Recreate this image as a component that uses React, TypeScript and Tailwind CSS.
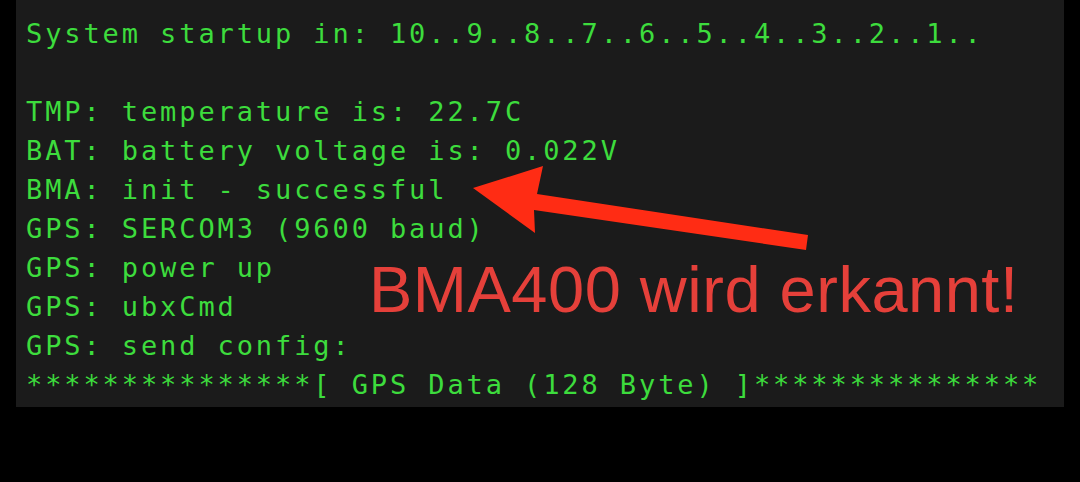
const lines = [
  "System startup in: 10..9..8..7..6..5..4..3..2..1..",
  "",
  "TMP: temperature is: 22.7C",
  "BAT: battery voltage is: 0.022V",
  "BMA: init - successful",
  "GPS: SERCOM3 (9600 baud)",
  "GPS: power up",
  "GPS: ubxCmd",
  "GPS: send config:",
  "***************[ GPS Data (128 Byte) ]***************",
];

function Arrow() {
  // page coords minus the panel's 16px left offset
  return (
    <svg
      className="absolute left-0 top-0 h-[407px] w-[1048px] pointer-events-none"
      viewBox="0 0 1048 407"
      aria-hidden="true"
    >
      <polygon
        points="457,188 527,166 521,194 792,235 790,250 518,210 519,233"
        fill="#ff2c14"
        style={{ filter: "blur(0.6px)" }}
      />
    </svg>
  );
}

export default function App() {
  return (
    <div className="h-[482px] w-full bg-black">
      <div className="relative ml-[16px] h-[407px] w-[1048px] overflow-hidden bg-[#1b1b1b]">
        <pre
          className="pl-[10px] pt-[14px] text-[27px] leading-[39px] tracking-[2.9px] text-[#3ddc3d]"
          style={{ fontFamily: '"DejaVu Sans Mono", "Liberation Mono", monospace' }}
        >
          {lines.map((l, i) => (
            <div key={i} className="h-[39px] whitespace-pre">
              {l}
            </div>
          ))}
        </pre>
        <Arrow />
        <div
          className="absolute left-[353px] top-[257px] whitespace-nowrap text-[65px] leading-[65px] tracking-[0.5px] text-[#e5403a] blur-[0.5px]"
          style={{ fontFamily: '"Liberation Sans", Arial, sans-serif' }}
        >
          BMA400 wird erkannt!
        </div>
      </div>
    </div>
  );
}
